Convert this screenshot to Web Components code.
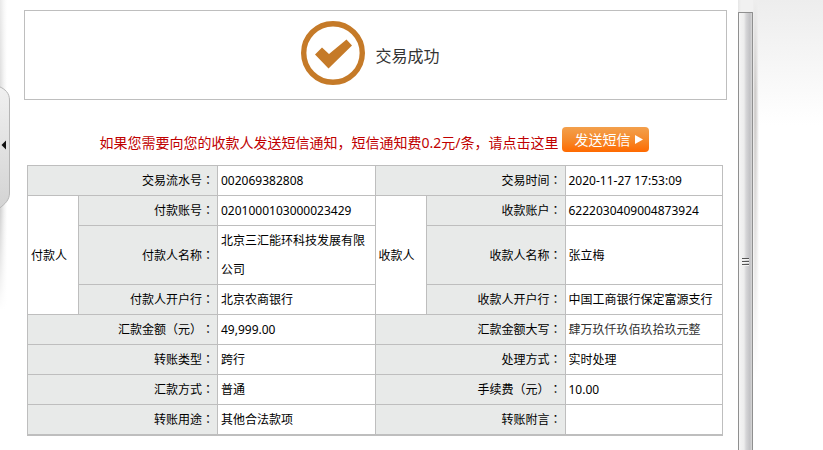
<!DOCTYPE html>
<html lang="zh-CN">
<head>
<meta charset="utf-8">
<title>交易成功</title>
<style>
  html, body { margin: 0; height: 100%; }
  body {
    background: #fff;
    color: #000;
    font: 12px/29px "Noto Sans", "Noto Sans CJK SC", sans-serif;
    text-spacing-trim: space-all;
    overflow: hidden;
  }
</style>
</head>
<body>
<bank-page>
  <result-banner>交易成功</result-banner>
  <sms-notice action="发送短信">如果您需要向您的收款人发送短信通知，短信通知费0.2元/条，请点击这里</sms-notice>
  <transfer-details></transfer-details>
</bank-page>
<script>
const mount = (el, html) => { el.attachShadow({ mode: 'open' }).innerHTML = html; };

customElements.define('bank-page', class extends HTMLElement {
  constructor() {
    super();
    mount(this, `<style>
      :host { display: grid; grid-template-columns: 10px minmax(0, 1fr) 15px 70px; height: 100vh; overflow: hidden; }
      main { padding: 10px 11px 0 14px; overflow: hidden; }
    </style>
    <side-handle></side-handle>
    <main><slot></slot></main>
    <scroll-track></scroll-track>
    <page-edge></page-edge>`);
  }
});

customElements.define('side-handle', class extends HTMLElement {
  constructor() {
    super();
    mount(this, `<style>
      :host { display: block; padding-top: 85px; background: linear-gradient(to bottom, #fff8 0, #fff0 180px, #fff0 210px, #fff 310px), linear-gradient(to right, #d0d0d0, #f0f0f0 4px, #fff 7px); }
      button { display: block; width: 10px; height: 124px; padding: 0; border: 0; background: none; }
      svg { display: block; }
    </style>
    <button type="button" aria-label="收起菜单">
      <svg width="10" height="124" viewBox="0 0 10 124">
        <defs><linearGradient id="g" x1="0" y1="0" x2="0" y2="1"><stop offset="0" stop-color="#f0f0f0"/><stop offset="1" stop-color="#d3d3d3"/></linearGradient></defs>
        <path d="M-1 1.5 C5 4 9.5 8 9.5 15 V108 C9.5 115 5 119 -1 123.5Z" fill="url(#g)" stroke="#b5b5b5"/>
        <path d="M1.5 60 L6 55.500 V64.500Z" fill="#111"/>
      </svg>
    </button>`);
  }
});

customElements.define('scroll-track', class extends HTMLElement {
  constructor() {
    super();
    mount(this, `<style>
      :host { display: flex; flex-direction: column; padding-top: 12px; background: linear-gradient(to right, #e6e6e6, #f1f1f1 3px, #f1f1f1); }
      .thumb { flex: 1; display: grid; place-content: center; padding-top: 62px; border: 1px solid #8f8f8f; border-bottom: 0; border-radius: 1px 1px 0 0;
        background: linear-gradient(to right, #f5f5f5, #ededed 5px, #d6d6d8 7px, #c1c1c4 11px, #d8d8d8); }
      svg { display: block; }
    </style>
    <div class="thumb"><svg width="7" height="9" viewBox="0 0 7 9"><path d="M0 1.500H7M0 4.500H7M0 7.500H7" stroke="#f4f4f4"/><path d="M0 .5H7M0 3.500H7M0 6.500H7" stroke="#555"/></svg></div>`);
  }
});

customElements.define('page-edge', class extends HTMLElement {
  constructor() {
    super();
    mount(this, `<style>
      :host { display: grid; grid-template-columns: 6px 1fr; }
      .shade { background: linear-gradient(to bottom, #eee 0, #eee0 90px, #fff0 120px, #fff 380px), linear-gradient(to right, #f4f4f4, #cbc8c6 2px, #e2e1e0 4px, #fff); }
      .sky { background: linear-gradient(to bottom, #ededed, #fff 125px); }
    </style>
    <div class="shade"></div><div class="sky"></div>`);
  }
});

customElements.define('result-banner', class extends HTMLElement {
  constructor() {
    super();
    mount(this, `<style>
      :host { display: flex; justify-content: center; gap: 10px; padding: 10px 10px 14px 0; border: 1px solid #bebebe; }
      svg { display: block; }
      h1 { margin: 0; padding-top: 23px; font-size: 16px; line-height: 24px; font-weight: 400; color: #333; }
    </style>
    <svg width="64" height="64" viewBox="0 0 64 64">
      <circle cx="32" cy="32" r="29.300" fill="none" stroke="#c57a28" stroke-width="5.400"/>
      <path d="M14 33.500 L21 26.500 L28 33 L45.500 18.500 L51 24.500 L27.500 47.500Z" fill="#c57a28"/>
    </svg>
    <h1><slot></slot></h1>`);
  }
});

customElements.define('sms-notice', class extends HTMLElement {
  constructor() {
    super();
    mount(this, `<style>
      :host { display: flex; justify-content: center; align-items: flex-start; gap: 4px; margin: 27px 2px 10px 0; font-size: 14px; line-height: 25px; color: #c00000; }
      span { padding-top: 3px; white-space: nowrap; }
      button { display: flex; align-items: center; gap: 5px; height: 25px; padding: 0 6px 0 12px; border: 0; border-radius: 4px;
        background: linear-gradient(#f3a04c, #f58a2c 50%, #ff6a00); color: #fff; font: inherit; white-space: nowrap; }
      svg { display: block; }
    </style>
    <span><slot></slot></span>
    <button type="button">${this.getAttribute('action')}<svg width="8" height="9" viewBox="0 0 8 9"><path d="M0 0 L8 4.500 L0 9Z" fill="#fff"/></svg></button>`);
  }
});

customElements.define('transfer-details', class extends HTMLElement {
  constructor() {
    super();
    const label = (text, span = 1) => `<th scope="row" colspan="${span}">${text}<span class="colon" lang="ja">：</span></th>`;
    const value = (text, cls = '') => `<td class="${cls}">${text}</td>`;
    const wide = (a, b, c, d, cls) => `<tr>${label(a, 2)}${value(b)}${label(c, 2)}${value(d, cls)}</tr>`;
    const inner = (a, b, c, d) => `<tr>${label(a)}${value(b)}${label(c)}${value(d)}</tr>`;
    mount(this, `<style>
      :host { display: block; margin: 0 4px 0 3px; }
      table { width: 100%; table-layout: fixed; border-collapse: collapse; border-bottom: 2px solid #bebebe; }
      .party { width: 51px; }
      .name { width: 139px; }
      th, td { height: 29px; padding: 0 3px; border: 1px solid #bebebe; font-weight: 400; text-align: left; }
      th { background: #e8eae9; text-align: right; }
      .colon { font-family: "Noto Sans CJK JP", sans-serif; line-height: 1; }
      .soft { color: #333; }
    </style>
    <table>
      <colgroup><col class="party"><col class="name"><col><col class="party"><col class="name"><col></colgroup>
      <tbody>
        ${wide('交易流水号', '002069382808', '交易时间', '2020-11-27 17:53:09')}
        <tr><td rowspan="3">付款人</td>${label('付款账号')}${value('0201000103000023429')}<td rowspan="3">收款人</td>${label('收款账户')}${value('6222030409004873924')}</tr>
        ${inner('付款人名称', '北京三汇能环科技发展有限公司', '收款人名称', '张立梅')}
        ${inner('付款人开户行', '北京农商银行', '收款人开户行', '中国工商银行保定富源支行')}
        ${wide('汇款金额（元）', '49,999.00', '汇款金额大写', '肆万玖仟玖佰玖拾玖元整', 'soft')}
        ${wide('转账类型', '跨行', '处理方式', '实时处理')}
        ${wide('汇款方式', '普通', '手续费（元）', '10.00')}
        ${wide('转账用途', '其他合法款项', '转账附言', '')}
      </tbody>
    </table>`);
  }
});
</script>
</body>
</html>
